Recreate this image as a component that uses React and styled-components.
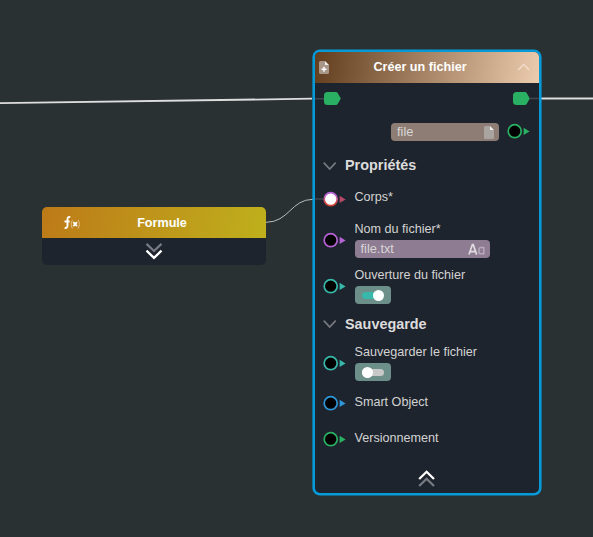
import React from 'react';
import styled, { createGlobalStyle } from 'styled-components';

const Global = createGlobalStyle`
  * { box-sizing: border-box; }
  body { margin: 0; background: #293133; font-family: "Liberation Sans", Arial, sans-serif; }
`;
const Canvas = styled.main`
  position: relative;
  width: 593px;
  height: 537px;
  overflow: hidden;
  background: #293133;
`;
const Wires = styled.svg`
  position: absolute;
  inset: 0;
  pointer-events: none;
`;
const Node = styled.section`
  position: absolute;
  left: ${p => p.$x}px;
  top: ${p => p.$y}px;
  width: 224px;
  height: ${p => p.$h}px;
  background: #1e242d;
  border-radius: 5px;
  box-shadow: ${p => (p.$selected ? '0 0 0 2.6px #069bd8' : 'none')};
`;
const Header = styled.header`
  display: flex;
  align-items: center;
  height: 31px;
  padding: ${p => p.$pad};
  border-radius: 5px 5px 0 0;
  background: ${p => p.$fill};
  color: #fff;
  svg { display: block; flex: none; }
`;
const Title = styled.h2`
  flex: 1;
  margin: 0;
  padding-right: ${p => p.$shift}px;
  padding-bottom: ${p => p.$lift || 0}px;
  text-align: center;
  font-size: 12.6px;
  line-height: 16px;
  font-weight: 700;
`;
const Toggle = styled.div`
  display: flex;
  justify-content: center;
  padding-top: ${p => p.$top}px;
`;
const ExecRow = styled.div`
  display: flex;
  justify-content: space-between;
  height: 40px;
  padding: 9px 9px 0 9px;
`;
const OutputRow = styled.div`
  display: flex;
  justify-content: flex-end;
  height: 28px;
  padding-right: 8px;
`;
const Field = styled.div`
  display: flex;
  align-items: center;
  justify-content: space-between;
  width: ${p => p.$w}px;
  height: 18px;
  padding: 0 4.6px 0 6px;
  border-radius: 4px;
  background: ${p => p.$bg};
  color: #d9d5d5;
  font-size: 12.8px;
  line-height: 18px;
`;
const SectionRow = styled.div`
  display: flex;
  align-items: center;
  gap: 8px;
  height: 29px;
  padding-left: 8px;
`;
const SectionTitle = styled.h3`
  margin: 0;
  padding-bottom: ${p => (p.$lift ? 1 : 0)}px;
  font-size: 14.4px;
  line-height: ${p => (p.$lift ? 17 : 18)}px;
  color: #dcdcdc;
`;
const Row = styled.div`
  display: flex;
  height: ${p => p.$h}px;
  padding-left: 8px;
`;
const PortCell = styled.div`
  flex: none;
  width: 31.5px;
  padding-top: ${p => p.$top}px;
`;
const PortSvg = styled.svg`
  display: block;
  flex: none;
`;
const Label = styled.div`
  padding-top: ${p => p.$top || 0}px;
  font-size: 12.6px;
  line-height: 17px;
  height: ${p => (p.$top || 0) + 19}px;
  color: #d3d3d3;
  white-space: nowrap;
`;
const SwitchBox = styled.div`
  display: flex;
  align-items: center;
  width: 36.5px;
  height: 18px;
  padding-left: 7px;
  border-radius: 4px;
  background: #6c8f8a;
`;
const Track = styled.div`
  display: flex;
  align-items: center;
  justify-content: ${p => (p.$on ? 'flex-end' : 'flex-start')};
  width: 22px;
  height: 7px;
  border-radius: 4px;
  background: ${p => (p.$on ? '#38b8aa' : '#c8c8c8')};
`;
const Knob = styled.span`
  width: 11px;
  height: 11px;
  border-radius: 50%;
  background: #fff;
`;

const Port = ({ color, connected }) => (
  <PortSvg width="24" height="16" viewBox="0 0 24 16">
    <defs>
      <linearGradient id="mixed" x1="0" y1="0" x2="0" y2="1">
        <stop offset="0.15" stopColor="#b662d6" />
        <stop offset="0.85" stopColor="#cf4335" />
      </linearGradient>
    </defs>
    <circle cx="7.7" cy="8.2" r="6.5" fill={connected ? '#fff' : '#000'}
      stroke={connected ? 'url(#mixed)' : color} strokeWidth="1.7" />
    <path d="M16.6 4.7 22.6 8.4 16.6 12.1Z" fill={connected ? '#b54a68' : color} />
  </PortSvg>
);
const ExecPin = () => (
  <svg width="17" height="13" viewBox="0 0 17 13">
    <path d="M3.5 0H12Q13 0 13.7 1L16.8 6.5 13.7 12Q13 13 12 13H3.5Q0 13 0 9.5V3.5Q0 0 3.5 0Z" fill="#29b062" />
  </svg>
);
const Chevron = () => (
  <svg width="14" height="10" viewBox="0 0 14 10">
    <path d="M1.2 2.2 6.7 8.1 12.2 2.2" fill="none" stroke="#777a80" strokeWidth="1.7" strokeLinecap="round" />
  </svg>
);
const DoubleChevron = ({ up }) => (
  <svg width="18" height="18" viewBox="0 0 18 18" fill="none" strokeWidth="2.3">
    <path d={up ? 'M1.2 17 8.6 9.8 16 17' : 'M1.5 1.8 9 9 16.5 1.8'} stroke="#777a82" />
    <path d={up ? 'M1.2 10 8.6 2.8 16 10' : 'M1.5 8.7 9 15.9 16.5 8.7'} stroke="#fff" />
  </svg>
);
const FileIcon = ({ plus }) => (
  <svg width="10" height="13" viewBox="0 0 10 13">
    <path d="M1.5 0H6V4H10V11.5Q10 13 8.5 13H1.5Q0 13 0 11.5V1.5Q0 0 1.5 0Z" fill={plus ? '#a89789' : '#aaa4a0'} />
    <path d="M6 0 10 4H6Z" fill="#f1eeeb" />
    {plus && <path d="M5 5.8V10.8M2.5 8.3H7.5" stroke="#fff" strokeWidth="1.5" />}
  </svg>
);
const TextIcon = () => (
  <svg width="17" height="12" viewBox="0 0 17 12" fill="none">
    <path d="M1 11.6 4.4 1.6H5.2L8.7 11.6M2.3 8.6H7.3" stroke="#e0dbe0" strokeWidth="1.7" />
    <path d="M15.8 3.8V11.6M15.8 4.5H12.8Q11 4.5 11 6.3V9Q11 10.8 12.8 10.8H15.8" stroke="#b7aabb" strokeWidth="1.5" />
  </svg>
);

const Switch = ({ on }) => <SwitchBox><Track $on={on}><Knob /></Track></SwitchBox>;
const Property = ({ h, color, portTop = 0, labelTop, label, connected, children }) => (
  <Row $h={h}>
    <PortCell $top={portTop}><Port color={color} connected={connected} /></PortCell>
    <div><Label $top={labelTop}>{label}</Label>{children}</div>
  </Row>
);

export default function App() {
  return (
    <>
      <Global />
      <Canvas>
        <Wires width="593" height="537" fill="none">
          <path d="M0 103.2 312 98.7M541 98.5H593" stroke="#dedede" strokeWidth="1.8" />
          <path d="M266 222.3C289 222.3 291 199.3 313 199.3" stroke="#b9bcbc" strokeWidth="1" />
        </Wires>
        <Node $x={42} $y={207} $h={58}>
          <Header $pad="0 4px 0 22px" $fill="linear-gradient(100deg,#bd7a18,#bfb01c)">
            <svg width="18" height="16" viewBox="0 0 18 16" fill="none">
              <path d="M6.3 2.3Q3.6 1.3 3.5 4V10.5Q3.4 13.5 .6 12.8M.5 6.5H5.6" stroke="#fff" strokeWidth="1.9" />
              <path d="M8.5 5Q5.9 9.2 8.5 13.5M14 5Q16.7 9.2 14 13.5" stroke="#dfb77b" strokeWidth="1.1" />
              <path d="M9.3 7.2 13 11.2M13 7.2 9.3 11.2" stroke="#fff" strokeWidth="1.8" />
            </svg>
            <Title $shift={20}>Formule</Title>
          </Header>
          <Toggle $top={4}><DoubleChevron /></Toggle>
        </Node>
        <Node $x={315} $y={52} $h={441} $selected>
          <Header $pad="0 9.5px 0 3.5px" $fill="linear-gradient(100deg,#613d1d,#ecccae)">
            <FileIcon plus />
            <Title $shift={5} $lift={2}>Créer un fichier</Title>
            <svg width="13" height="9" viewBox="0 0 13 9">
              <path d="M1.2 7 6.7 1.4 12.2 7" fill="none" stroke="#f3dfcd" strokeWidth="1.3" />
            </svg>
          </Header>
          <ExecRow><ExecPin /><ExecPin /></ExecRow>
          <OutputRow>
            <Field $w={108} $bg="#8d7d74">file<FileIcon /></Field>
            <Row $h={18}><Port color="#29b062" /></Row>
          </OutputRow>
          <SectionRow><Chevron /><SectionTitle $lift>Propriétés</SectionTitle></SectionRow>
          <Property h={41} portTop={11} labelTop={9} label="Corps*" connected />
          <Property h={46} portTop={11} labelTop={0} label="Nom du fichier*" color="#b662d6">
            <Field $w={135} $bg="#8d7c92">file.txt<TextIcon /></Field>
          </Property>
          <Property h={42} portTop={11} label="Ouverture du fichier" color="#38b8aa"><Switch on /></Property>
          <SectionRow><Chevron /><SectionTitle>Sauvegarde</SectionTitle></SectionRow>
          <Property h={56} portTop={17} labelTop={6} label="Sauvegarder le fichier" color="#38b8aa"><Switch /></Property>
          <Property h={36} portTop={1} color="#2e96d8" label="Smart Object" />
          <Property h={36} portTop={1} color="#29b062" label="Versionnement" />
          <Toggle $top={3}><DoubleChevron up /></Toggle>
        </Node>
        <Wires width="593" height="537" fill="none">
          <path d="M315 98.7H324M530 98.5H539M315 199H323" stroke="#41464e" strokeWidth="1.6" />
        </Wires>
      </Canvas>
    </>
  );
}
